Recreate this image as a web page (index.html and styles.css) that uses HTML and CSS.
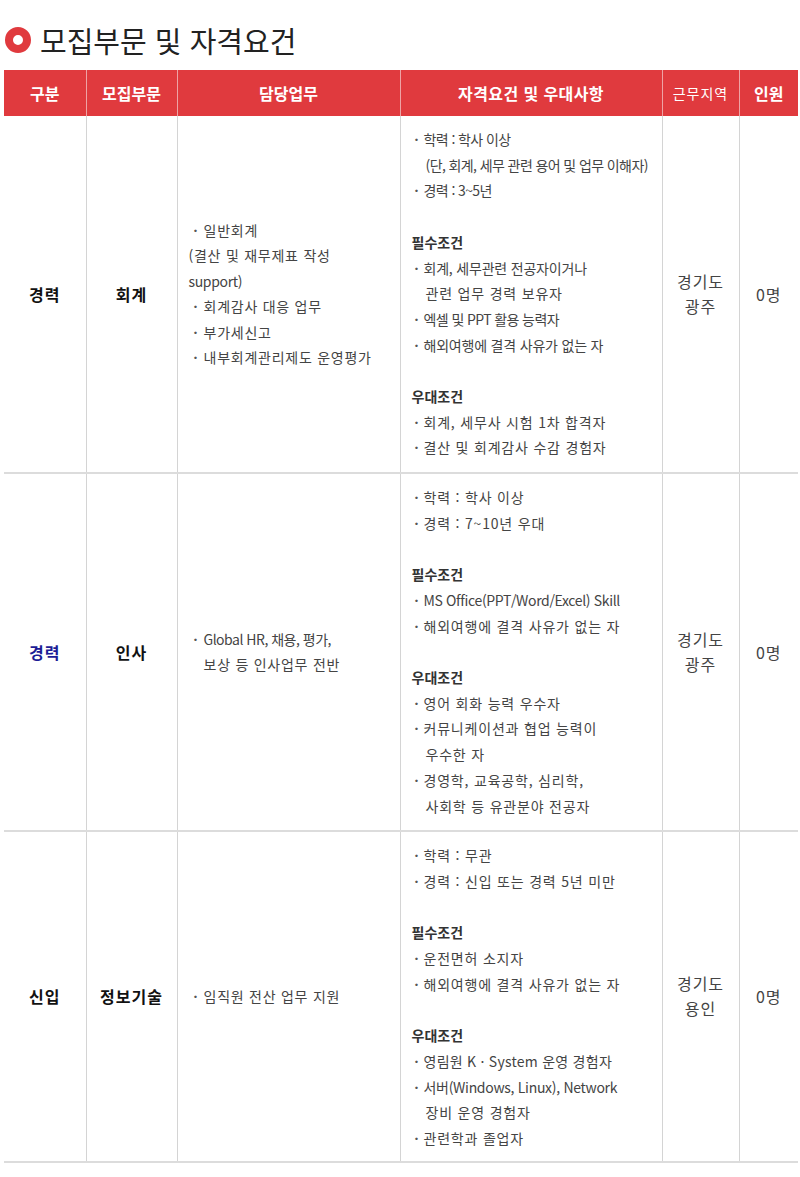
FILE: index.html
```html
<!DOCTYPE html>
<html lang="ko">
<head>
<meta charset="utf-8">
<title>모집부문 및 자격요건</title>
<link rel="stylesheet" href="styles.css">
</head>
<body>
<div class="page">
  <h2 class="title"><span class="ring"></span>모집부문 및 자격요건</h2>
  <table class="recruit">
    <colgroup>
      <col class="c1"><col class="c2"><col class="c3"><col class="c4"><col class="c5"><col class="c6">
    </colgroup>
    <thead>
      <tr>
        <th>구분</th>
        <th>모집부문</th>
        <th>담당업무</th>
        <th class="wide">자격요건 및 우대사항</th>
        <th class="small">근무지역</th>
        <th>인원</th>
      </tr>
    </thead>
    <tbody>
      <tr>
        <td class="kind">경력</td>
        <td class="part">회계</td>
        <td class="duty">
          <div class="ln bl"><span class="b">·</span>일반회계</div>
          <div class="ln">(결산 및 재무제표 작성</div>
          <div class="ln lat">support)</div>
          <div class="ln bl"><span class="b">·</span>회계감사 대응 업무</div>
          <div class="ln bl"><span class="b">·</span>부가세신고</div>
          <div class="ln bl"><span class="b">·</span>내부회계관리제도 운영평가</div>
        </td>
        <td class="req">
          <div class="ln tight"><span class="b">·</span>학력 : 학사 이상</div>
          <div class="ln cont tight">(단, 회계, 세무 관련 용어 및 업무 이해자)</div>
          <div class="ln tight"><span class="b">·</span>경력 : 3~5년</div>
          <div class="ln sp"></div>
          <div class="ln hd">필수조건</div>
          <div class="ln semi"><span class="b">·</span>회계, 세무관련 전공자이거나</div>
          <div class="ln cont">관련 업무 경력 보유자</div>
          <div class="ln tight"><span class="b">·</span>엑셀 및 PPT 활용 능력자</div>
          <div class="ln semi"><span class="b">·</span>해외여행에 결격 사유가 없는 자</div>
          <div class="ln sp"></div>
          <div class="ln hd">우대조건</div>
          <div class="ln"><span class="b">·</span>회계, 세무사 시험 1차 합격자</div>
          <div class="ln"><span class="b">·</span>결산 및 회계감사 수감 경험자</div>
        </td>
        <td class="area">경기도<br>광주</td>
        <td class="num">0명</td>
      </tr>
      <tr>
        <td class="kind blue">경력</td>
        <td class="part">인사</td>
        <td class="duty">
          <div class="ln bl mix"><span class="b">·</span>Global HR, 채용, 평가,</div>
          <div class="ln bl"><span class="b"></span>보상 등 인사업무 전반</div>
        </td>
        <td class="req">
          <div class="ln"><span class="b">·</span>학력 : 학사 이상</div>
          <div class="ln"><span class="b">·</span>경력 : 7~10년 우대</div>
          <div class="ln sp"></div>
          <div class="ln hd">필수조건</div>
          <div class="ln lat"><span class="b">·</span>MS Office(PPT/Word/Excel) Skill</div>
          <div class="ln"><span class="b">·</span>해외여행에 결격 사유가 없는 자</div>
          <div class="ln sp"></div>
          <div class="ln hd">우대조건</div>
          <div class="ln"><span class="b">·</span>영어 회화 능력 우수자</div>
          <div class="ln"><span class="b">·</span>커뮤니케이션과 협업 능력이</div>
          <div class="ln cont">우수한 자</div>
          <div class="ln"><span class="b">·</span>경영학, 교육공학, 심리학,</div>
          <div class="ln cont">사회학 등 유관분야 전공자</div>
        </td>
        <td class="area">경기도<br>광주</td>
        <td class="num">0명</td>
      </tr>
      <tr>
        <td class="kind">신입</td>
        <td class="part">정보기술</td>
        <td class="duty">
          <div class="ln bl"><span class="b">·</span>임직원 전산 업무 지원</div>
        </td>
        <td class="req last">
          <div class="ln"><span class="b">·</span>학력 : 무관</div>
          <div class="ln"><span class="b">·</span>경력 : 신입 또는 경력 5년 미만</div>
          <div class="ln sp"></div>
          <div class="ln hd">필수조건</div>
          <div class="ln"><span class="b">·</span>운전면허 소지자</div>
          <div class="ln"><span class="b">·</span>해외여행에 결격 사유가 없는 자</div>
          <div class="ln sp"></div>
          <div class="ln hd">우대조건</div>
          <div class="ln few"><span class="b">·</span>영림원 K · System 운영 경험자</div>
          <div class="ln mix2"><span class="b">·</span>서버(Windows, Linux), Network</div>
          <div class="ln cont">장비 운영 경험자</div>
          <div class="ln"><span class="b">·</span>관련학과 졸업자</div>
        </td>
        <td class="area">경기도<br>용인</td>
        <td class="num">0명</td>
      </tr>
    </tbody>
  </table>
</div>
</body>
</html>
```

FILE: styles.css
```css
html, body {
  margin: 0;
  padding: 0;
  background: #ffffff;
}

body {
  font-family: "Noto Sans CJK KR", "Noto Sans", sans-serif;
  color: #444;
}

.page {
  padding: 20px 2px 0 4px;
}

.title {
  display: flex;
  align-items: center;
  gap: 9px;
  margin: 0 0 10px 1px;
  height: 40px;
  font-size: 29px;
  font-weight: 400;
  color: #222;
}

.ring {
  display: inline-block;
  box-sizing: border-box;
  width: 26px;
  height: 26px;
  border-radius: 50%;
  border: 8.5px solid #e03a3e;
  background: #fff;
  flex: none;
}

.recruit {
  width: 794px;
  border-collapse: collapse;
  table-layout: fixed;
}

.c1 { width: 82px; }
.c2 { width: 91px; }
.c3 { width: 223px; }
.c4 { width: 262px; }
.c5 { width: 77px; }
.c6 { width: 59px; }

.recruit th {
  height: 46px;
  padding: 0;
  background: #e03a3e;
  color: #fff;
  font-size: 16px;
  font-weight: 700;
  text-align: center;
  vertical-align: middle;
  border-left: 1px solid #eea3a5;
}

.recruit th:first-child {
  border-left: none;
}

.recruit th.wide {
  letter-spacing: 0.4px;
}

.recruit th.small {
  font-size: 14px;
  font-weight: 400;
  letter-spacing: 1px;
}

.recruit td {
  padding: 11px 0;
  vertical-align: middle;
  border-left: 1px solid #d4d4d4;
  border-bottom: 2px solid #dcdcdc;
  font-size: 14px;
  color: #444;
}

.recruit td:first-child {
  border-left: none;
}

.recruit td.last {
  padding-bottom: 9px;
}

.kind, .part {
  text-align: center;
  font-size: 16px !important;
  font-weight: 700;
  letter-spacing: 1px;
  color: #111 !important;
}

.kind.blue {
  color: #1c1c96 !important;
}

.duty {
  padding-left: 11px !important;
  line-height: 25.5px;
  letter-spacing: 0.75px;
}

.req {
  padding-left: 11px !important;
  line-height: 25.7px;
  letter-spacing: 0.8px;
}

.ln {
  white-space: nowrap;
}

.ln.sp {
  height: 25.7px;
}

.b {
  display: inline-block;
  width: 9px;
  font-family: "Noto Sans", sans-serif;
  font-weight: 700;
  color: #555;
  letter-spacing: 0;
}

.req .ln .b {
  margin-left: 3px;
}

.duty .bl .b {
  margin-left: 5px;
  width: 10px;
}

.cont {
  padding-left: 14px;
}

.tight {
  letter-spacing: -0.6px;
}

.semi {
  letter-spacing: -0.2px;
}

.lat {
  letter-spacing: -0.35px;
}

.mix {
  letter-spacing: -0.5px;
}

.mix2 {
  letter-spacing: -0.3px;
}

.few {
  letter-spacing: 0.25px;
}

.hd {
  font-weight: 700;
  color: #333;
  letter-spacing: 0;
}

.area {
  text-align: center;
  font-size: 16px !important;
  line-height: 25px;
  letter-spacing: 1px;
}

.num {
  text-align: center;
  font-size: 16px !important;
  letter-spacing: 1px;
}
```
